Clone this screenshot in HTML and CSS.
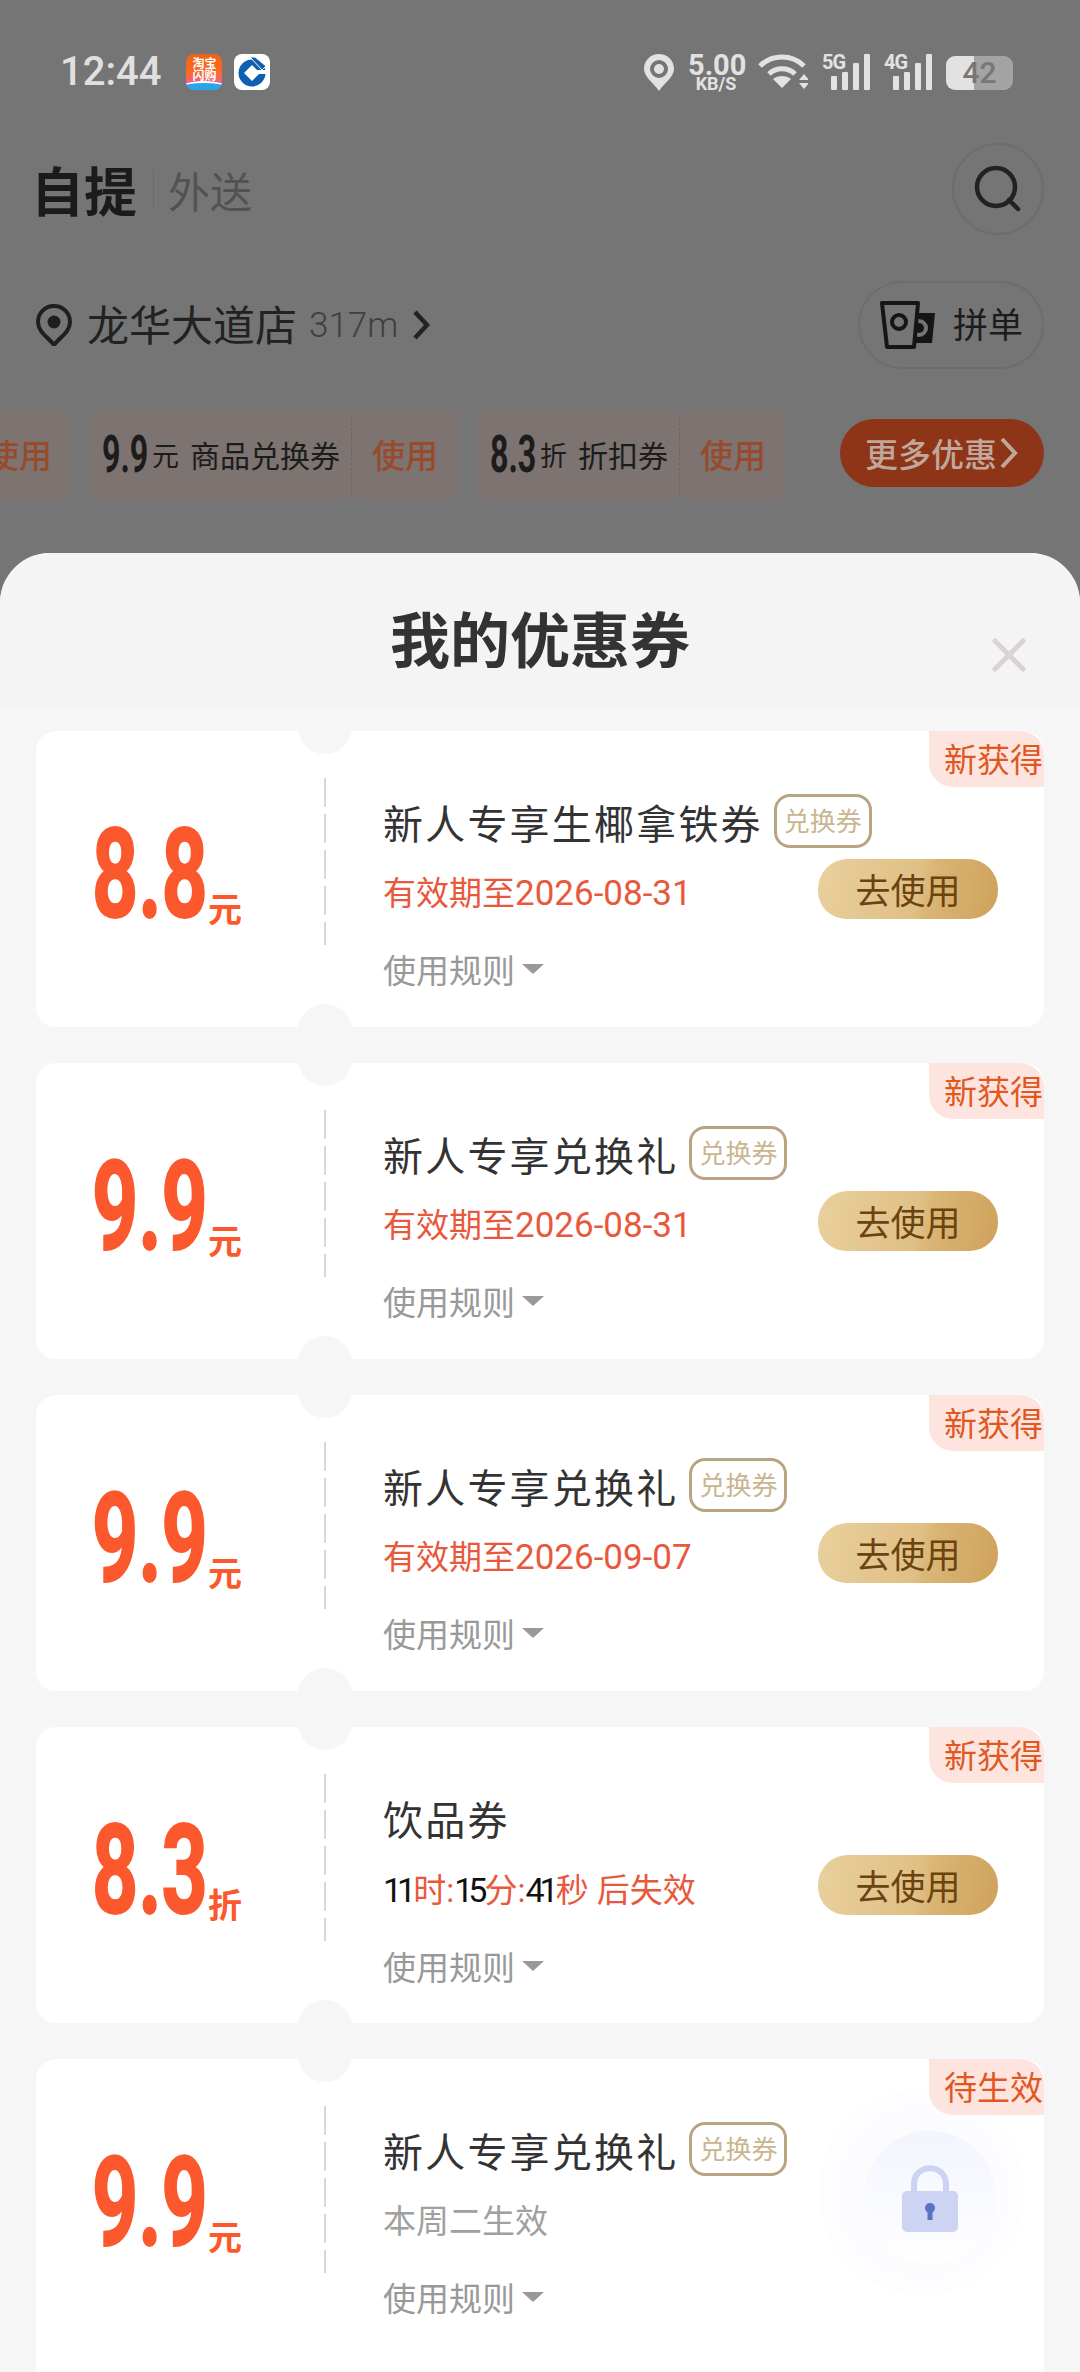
FILE: index.html
```html
<!DOCTYPE html>
<html lang="zh-CN">
<head>
    <meta charset="UTF-8" />
    <title>我的优惠券</title>
    <link rel="stylesheet" href="styles.css">
</head>
<body>
    <div class="status">
        <span class="time">12:44</span>
        <div class="app-icon tb"><span>淘宝</span><span>闪购</span><i></i></div>
        <div class="app-icon ccb">
            <svg width="30" height="30" viewBox="0 0 30 30"><circle cx="15" cy="16" r="13.500" fill="#0f5fb0"/><path d="M15 8 L23 16 L15 24 L7 16 Z" fill="#fff"/><path d="M18 13 L30 13 L30 17 L20 17 Z" fill="#fff"/><path d="M13 0 L18 0 L29 9 L25 13 Z" fill="#0f5fb0" stroke="#fff" stroke-width="1"/></svg>
        </div>
        <div class="status-right">
            <svg width="30" height="37" viewBox="0 0 30 37"><path d="M15 0 C7 0 0 6 0 15 C0 23 9 28 15 37 C21 28 30 23 30 15 C30 6 23 0 15 0 Z" fill="#e2e2e2"/><circle cx="15" cy="15" r="7" fill="none" stroke="#757575" stroke-width="4"/></svg>
            <div class="speed"><b>5.00</b><small>KB/S</small></div>
            <svg width="50" height="35" viewBox="0 0 50 35" fill="none" stroke="#e2e2e2" stroke-width="5"><path d="M2 12 C14 0 34 0 46 12"/><path d="M11 20 C18 13 30 13 37 20"/><path d="M24 34 L15 25 C20 21 28 21 33 25 Z" fill="#e2e2e2" stroke="none"/><path d="M46 20 L51 26 L41 26 Z M41 29 L51 29 L46 35 Z" fill="#e2e2e2" stroke="none"/></svg>
            <div class="signal"><span class="gen">5G</span><i class="s1"></i><i class="s2"></i><i class="s3"></i><i class="s4"></i></div>
            <div class="signal"><span class="gen">4G</span><i class="s1"></i><i class="s2"></i><i class="s3"></i><i class="s4"></i></div>
            <div class="battery"><span>42</span></div>
        </div>
    </div>

    <div class="nav">
        <span class="nav-on">自提</span>
        <span class="nav-sep"></span>
        <span class="nav-off">外送</span>
        <div class="search">
            <svg width="48" height="48" viewBox="0 0 48 48" fill="none" stroke="#222" stroke-width="4.500"><circle cx="22" cy="22" r="19"/><path d="M35 35 L44 44" stroke-linecap="round"/></svg>
        </div>
    </div>

    <div class="store">
        <svg width="36" height="42" viewBox="0 0 36 42"><path d="M18 2 C9 2 2 9 2 18 C2 28 12 33 18 41 C24 33 34 28 34 18 C34 9 27 2 18 2 Z" fill="none" stroke="#1f1f1f" stroke-width="4"/><circle cx="18" cy="18" r="6.500" fill="#1f1f1f"/></svg>
        <span class="store-name">龙华大道店</span>
        <span class="store-dist">317m</span>
        <svg width="18" height="30" viewBox="0 0 18 30" fill="none" stroke="#222" stroke-width="4.500"><path d="M3 2 L15 15 L3 28"/></svg>
        <div class="group-btn">
            <svg width="56" height="48" viewBox="0 0 56 48"><path d="M36 12 H55 L52 42 H34 Z" fill="#151515"/><circle cx="39" cy="27" r="7" fill="none" stroke="#757575" stroke-width="4"/><path d="M2 2 H38 L34 46 H7 Z" fill="#757575" stroke="#151515" stroke-width="4" stroke-linejoin="round"/><circle cx="19" cy="21" r="7" fill="none" stroke="#151515" stroke-width="4"/></svg>
            <span>拼单</span>
        </div>
    </div>

    <div class="strip">
        <div class="chip chip-cut"><div class="chip-use"><span>使用</span></div></div>
        <div class="chip chip-wide">
            <div class="chip-main"><b>9.9</b><em>元</em><span>商品兑换券</span></div>
            <div class="chip-use"><span>使用</span></div>
        </div>
        <div class="chip chip-short">
            <div class="chip-main"><b>8.3</b><em>折</em><span>折扣券</span></div>
            <div class="chip-use"><span>使用</span></div>
        </div>
        <div class="more">更多优惠<svg width="20" height="32" viewBox="0 0 20 32" fill="none" stroke="#c0a79c" stroke-width="4"><path d="M3 2 L16 16 L3 30"/></svg></div>
    </div>

    <div class="sheet">
        <div class="sheet-head">
            <h1>我的优惠券</h1>
            <svg class="close" width="34" height="34" viewBox="0 0 34 34" stroke="#d9d3d4" stroke-width="5" stroke-linecap="round"><path d="M3 3 L31 31 M31 3 L3 31"/></svg>
        </div>
        <div class="list">
            <div class="card">
                <div class="badge">新获得</div>
                <div class="price"><b>8.8</b><em>元</em></div>
                <div class="info">
                    <div class="name">新人专享生椰拿铁券<span class="tag">兑换券</span></div>
                    <div class="valid">有效期至<span class="date">2026-08-31</span></div>
                    <div class="rule">使用规则<i></i></div>
                </div>
                <div class="go">去使用</div>
            </div>
            <div class="card">
                <div class="badge">新获得</div>
                <div class="price"><b>9.9</b><em>元</em></div>
                <div class="info">
                    <div class="name">新人专享兑换礼<span class="tag">兑换券</span></div>
                    <div class="valid">有效期至<span class="date">2026-08-31</span></div>
                    <div class="rule">使用规则<i></i></div>
                </div>
                <div class="go">去使用</div>
            </div>
            <div class="card">
                <div class="badge">新获得</div>
                <div class="price"><b>9.9</b><em>元</em></div>
                <div class="info">
                    <div class="name">新人专享兑换礼<span class="tag">兑换券</span></div>
                    <div class="valid">有效期至<span class="date">2026-09-07</span></div>
                    <div class="rule">使用规则<i></i></div>
                </div>
                <div class="go">去使用</div>
            </div>
            <div class="card">
                <div class="badge">新获得</div>
                <div class="price"><b>8.3</b><em>折</em></div>
                <div class="info">
                    <div class="name">饮品券</div>
                    <div class="valid"><span class="num">11</span>时:<span class="num">15</span>分:<span class="num">41</span>秒 后失效</div>
                    <div class="rule">使用规则<i></i></div>
                </div>
                <div class="go">去使用</div>
            </div>
            <div class="card card-last">
                <div class="badge">待生效</div>
                <div class="price"><b>9.9</b><em>元</em></div>
                <div class="info">
                    <div class="name">新人专享兑换礼<span class="tag">兑换券</span></div>
                    <div class="valid valid-grey">本周二生效</div>
                    <div class="rule">使用规则<i></i></div>
                </div>
                <div class="lock">
                    <div class="lock-in">
                        <svg width="58" height="68" viewBox="0 0 58 68"><path d="M13 30 V19 C13 -2 45 -2 45 19 V30" fill="none" stroke="#cdd3f2" stroke-width="6"/><rect x="1" y="26" width="56" height="41" rx="5" fill="#cdd3f2"/><circle cx="29" cy="43" r="5" fill="#5b72c0"/><rect x="26.500" y="44" width="5" height="11" fill="#5b72c0"/></svg>
                    </div>
                </div>
            </div>
        </div>
    </div>
</body>
</html>
```

FILE: styles.css
```css
* {
    box-sizing: border-box;
}
html, body {
    margin: 0;
    padding: 0;
}
body {
    width: 1080px;
    height: 2372px;
    overflow: hidden;
    display: flex;
    flex-direction: column;
    background-color: #757575;
    font-family: "Noto Sans CJK SC", "Noto Sans", sans-serif;
}

/* status bar */
.status {
    height: 100px;
    padding: 54px 67px 0 60px;
    display: flex;
    align-items: flex-start;
}
.time {
    font-family: Roboto, sans-serif;
    font-weight: 500;
    font-size: 40px;
    line-height: 36px;
    color: #e0e0e0;
    margin-right: 25px;
}
.app-icon {
    position: relative;
    width: 36px;
    height: 36px;
    border-radius: 8px;
    margin-right: 12px;
    overflow: hidden;
}
.tb {
    background: linear-gradient(#f0640f, #f76a2c 55%, #f0608a 78%);
    color: #fff;
    font-size: 12px;
    font-weight: 700;
    line-height: 12px;
    text-align: center;
    padding-top: 3px;
    display: flex;
    flex-direction: column;
}
.tb i {
    position: absolute;
    left: -4px;
    right: -4px;
    bottom: -3px;
    height: 12px;
    background: #2aa6e6;
    border-top: 2px solid #fff;
    border-radius: 50% 50% 0 0;
}
.ccb {
    background: #fff;
    display: flex;
    align-items: center;
    justify-content: center;
}
.status-right {
    margin-left: auto;
    display: flex;
    align-items: flex-start;
    gap: 14px;
}
.speed {
    font-family: Roboto, sans-serif;
    text-align: center;
    color: #e2e2e2;
    width: 56px;
    white-space: nowrap;
}
.speed b {
    display: block;
    font-size: 29px;
    line-height: 23px;
    font-weight: 700;
}
.speed small {
    display: block;
    font-size: 18px;
    line-height: 13px;
    font-weight: 700;
}
.signal {
    position: relative;
    width: 48px;
    height: 36px;
    display: flex;
    align-items: flex-end;
    justify-content: flex-end;
    gap: 5px;
}
.signal i {
    width: 6px;
    background: #e2e2e2;
    border-radius: 1px;
}
.signal .s1 { height: 14px; }
.signal .s2 { height: 18px; }
.signal .s3 { height: 27px; }
.signal .s4 { height: 36px; }
.gen {
    position: absolute;
    left: 0;
    top: -1px;
    font-family: Roboto, sans-serif;
    font-weight: 700;
    font-size: 20px;
    line-height: 18px;
    letter-spacing: -1px;
    color: #e2e2e2;
}
.battery {
    position: relative;
    width: 67px;
    height: 34px;
    margin-top: 2px;
    border-radius: 9px;
    background: linear-gradient(90deg, #e2e2e2 42%, #a3a3a3 42%);
    text-align: center;
    font-family: Roboto, sans-serif;
    font-weight: 500;
    font-size: 30px;
    line-height: 34px;
    color: #767676;
}

/* nav */
.nav {
    height: 92px;
    margin-top: 43px;
    padding: 0 36px 0 31px;
    display: flex;
    align-items: center;
}
.nav-on {
    font-size: 53px;
    font-weight: 700;
    color: #1b1b1b;
}
.nav-sep {
    width: 1px;
    height: 40px;
    background: #6a6a6a;
    margin: 0 14px 0 16px;
}
.nav-off {
    font-size: 42px;
    color: #525252;
}
.search {
    margin-left: auto;
    width: 92px;
    height: 92px;
    border: 2px solid #6d6d6d;
    border-radius: 50%;
    display: flex;
    align-items: center;
    justify-content: center;
}

/* store row */
.store {
    height: 88px;
    margin-top: 46px;
    padding: 0 36px;
    display: flex;
    align-items: center;
}
.store-name {
    font-size: 42px;
    padding-bottom: 5px;
    color: #222;
    margin-left: 15px;
}
.store-dist {
    font-family: Roboto, sans-serif;
    font-weight: 300;
    font-size: 35px;
    color: #3f3f3f;
    margin: 0 14px 0 12px;
}
.group-btn {
    margin-left: auto;
    width: 186px;
    height: 88px;
    border: 2px solid #6d6d6d;
    border-radius: 44px;
    display: flex;
    align-items: center;
    padding-left: 20px;
    gap: 17px;
    font-size: 35px;
    color: #1c1c1c;
}
.group-btn span {
    padding-bottom: 5px;
}

/* coupon strip */
.strip {
    height: 92px;
    margin-top: 39px;
    padding-right: 36px;
    display: flex;
    align-items: center;
    gap: 17px;
}
.chip {
    flex: none;
    height: 91px;
    display: flex;
}
.chip-cut {
    width: 72px;
    overflow: hidden;
    justify-content: flex-end;
}
.chip-wide {
    width: 369px;
}
.chip-short {
    width: 309px;
    margin-left: 2px;
}
.chip-main, .chip-use {
    background: #7d7472;
    display: flex;
    align-items: center;
    white-space: nowrap;
    border-radius: 8px;
}
.chip-use {
    position: relative;
    flex: none;
    width: 107px;
    justify-content: center;
    font-size: 33px;
    font-weight: 500;
    color: #984a2d;
    border-left: 1px dashed #6f6462;
}
/* little bites at both ends of the seam */
.chip-use::before, .chip-use::after {
    content: "";
    position: absolute;
    left: -6px;
    width: 12px;
    height: 12px;
    border-radius: 50%;
    background: #757575;
}
.chip-use::before { top: -6px; }
.chip-use::after { bottom: -6px; }
.chip-main {
    flex: 1;
    padding-left: 13px;
    color: #1c1c1c;
}
.chip-main b {
    font-family: Roboto, sans-serif;
    font-size: 52px;
    font-weight: 700;
    display: inline-block;
    width: 50px;
    transform: scaleX(.62);
    transform-origin: left;
}
.chip-main em {
    font-style: normal;
    font-size: 27px;
    margin-right: 11px;
}
.chip-main span {
    font-size: 30px;
}
.more {
    margin: -3px 0 0 auto;
    width: 204px;
    height: 68px;
    border-radius: 34px;
    background: #8e3417;
    color: #c0a79c;
    font-size: 33px;
    font-weight: 500;
    display: flex;
    align-items: center;
    justify-content: center;
    gap: 2px;
}

/* sheet */
.sheet {
    flex: 1;
    margin-top: 53px;
    background: #f6f6f6;
    border-radius: 50px 50px 0 0;
    overflow: hidden;
    display: flex;
    flex-direction: column;
}
.sheet-head {
    flex: none;
    height: 156px;
    position: relative;
    text-align: center;
    background: #f4f4f4;
}
.sheet-head h1 {
    margin: 0;
    padding-top: 42px;
    font-size: 60px;
    line-height: 84px;
    font-weight: 700;
    color: #333;
}
.close {
    position: absolute;
    right: 54px;
    top: 85px;
}
.list {
    flex: 1;
    padding: 22px 36px 0;
    display: flex;
    flex-direction: column;
    gap: 36px;
}
.card {
    position: relative;
    flex: none;
    height: 296px;
    background: #fff;
    border-radius: 20px;
    overflow: hidden;
    display: flex;
    align-items: flex-start;
}
.card-last {
    flex: 1;
    height: auto;
    border-radius: 20px 20px 0 0;
}
/* notches at top and bottom of the tear line */
.card::before, .card::after {
    content: "";
    position: absolute;
    left: 262px;
    width: 54px;
    height: 54px;
    border-radius: 50%;
    background: #f6f6f6;
}
.card::before { top: -31px; }
.card::after { bottom: -31px; }
.card-last::after { display: none; }
.badge {
    position: absolute;
    z-index: 1;
    top: 0;
    right: 0;
    width: 115px;
    height: 56px;
    padding-left: 15px;
    background: #fde4df;
    border-radius: 0 24px 0 24px;
    font-size: 33px;
    line-height: 54px;
    white-space: nowrap;
    color: #e0581f;
}
.price {
    width: 290px;
    height: 167px;
    margin-top: 47px;
    flex: none;
    padding-left: 56px;
    background: linear-gradient(#d8d8d8 80%, transparent 0) right top / 2px 36px repeat-y;
    display: flex;
    align-items: flex-end;
    color: #fb582d;
    white-space: nowrap;
}
.price b {
    font-family: Roboto, sans-serif;
    font-size: 124px;
    line-height: 150px;
    font-weight: 700;
    display: inline-block;
    width: 116px;
    margin-bottom: -5px;
    transform: scaleX(.65);
    transform-origin: left;
    -webkit-text-stroke: 2px #fb582d;
}
.price em {
    font-style: normal;
    font-size: 34px;
    line-height: 34px;
    font-weight: 700;
    margin-bottom: 20px;
}
.info {
    padding: 63px 0 0 57px;
    flex: 1;
}
.name {
    display: flex;
    align-items: center;
    font-size: 40px;
    line-height: 56px;
    letter-spacing: 2.200px;
    color: #333;
}
.tag {
    margin: -2px 0 0 11px;
    width: 98px;
    height: 54px;
    border: 3px solid #b9a381;
    border-radius: 16px;
    font-size: 26px;
    line-height: 46px;
    letter-spacing: 0;
    text-align: center;
    color: #c9b690;
}
.valid {
    margin-top: 20px;
    font-family: Roboto, "Noto Sans CJK SC", sans-serif;
    font-size: 33px;
    line-height: 48px;
    color: #e8583c;
}
.date {
    font-size: 35px;
}
.num {
    font-size: 34px;
    letter-spacing: -5px;
    margin-right: 2px;
    color: #111;
}
.valid-grey {
    color: #a0a0a0;
}
.rule {
    margin-top: 27px;
    font-size: 33px;
    line-height: 48px;
    color: #999;
    display: flex;
    align-items: center;
}
.rule i {
    margin-left: 7px;
    border-left: 11px solid transparent;
    border-right: 11px solid transparent;
    border-top: 10px solid #999;
}
.go {
    position: absolute;
    right: 46px;
    top: 128px;
    width: 180px;
    height: 60px;
    border-radius: 30px 30px 28px 28px;
    background: linear-gradient(100deg, #e9d09d 0%, #dfbf84 56%, #dab574 62%, #cfa25c 100%);
    font-size: 35px;
    line-height: 60px;
    text-align: center;
    color: #6b4310;
}
.lock {
    position: absolute;
    right: 19px;
    top: 30px;
    width: 206px;
    height: 206px;
    border-radius: 50%;
    background: radial-gradient(circle at center, #fcfcff 40%, #fff 100%);
    display: flex;
    justify-content: center;
    padding: 42px 0 0 16px;
}
.lock-in {
    width: 132px;
    height: 132px;
    border-radius: 50%;
    background: linear-gradient(#f3f5fe, #fff);
    display: flex;
    align-items: center;
    justify-content: center;
    padding-top: 4px;
}
```
